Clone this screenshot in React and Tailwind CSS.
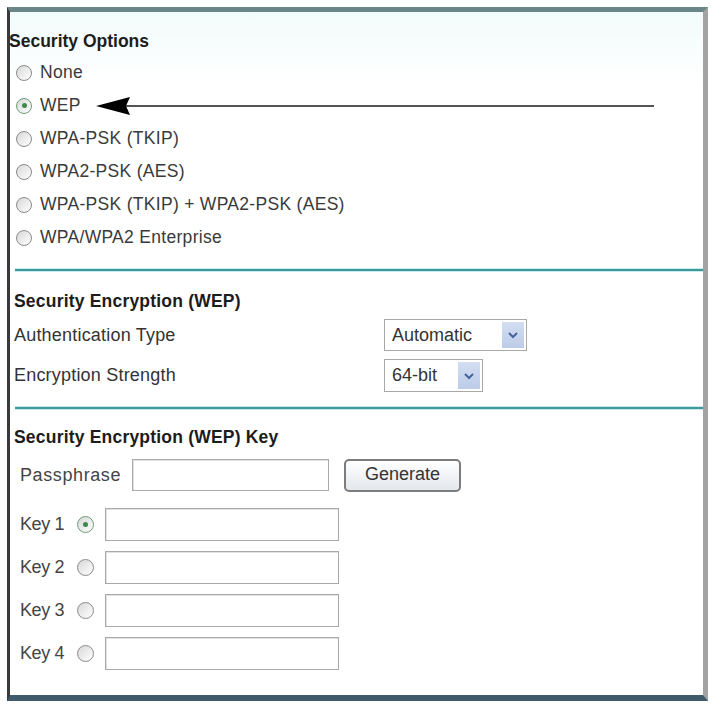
const font = "font-['Liberation_Sans',Arial,sans-serif]";

function Radio({ checked, size = 'w-[16px] h-[16px]' }) {
  return (
    <span
      className={`shrink-0 flex items-center justify-center ${size} rounded-full border-[1.5px] bg-gradient-to-br from-[#d8d8d8] to-white ${
        checked ? 'border-[#6c9c76]' : 'border-[#8a8a8a]'
      }`}
    >
      {checked && <span className="w-[5px] h-[5px] rounded-full bg-[#3d8a4c]" />}
    </span>
  );
}

function Divider({ className = '' }) {
  return (
    <div className={`ml-[5px] h-[2px] bg-[#3d999c] shadow-[0_1px_0_#c6ecee,0_-1px_0_#c6ecee] ${className}`} />
  );
}

function Select({ value, width }) {
  return (
    <div className={`${width} flex items-stretch border border-[#a8a8a8] bg-white p-[2px]`}>
      <span className="flex-1 flex items-center pl-[5px] text-[18px] text-[#333]">{value}</span>
      <span className="w-[22px] flex items-center justify-center bg-gradient-to-b from-[#d3def2] to-[#bccbe8]">
        <svg width="12" height="8" viewBox="0 0 12 8">
          <path d="M2 2 L6 6 L10 2" fill="none" stroke="#45639c" strokeWidth="2" />
        </svg>
      </span>
    </div>
  );
}

function TextBox({ width, height }) {
  return <div className={`${width} ${height} border border-[#a9a9a9] bg-white shadow-[inset_1px_1px_0_#e2e2e2]`} />;
}

const options = [
  'None',
  'WEP',
  'WPA-PSK (TKIP)',
  'WPA2-PSK (AES)',
  'WPA-PSK (TKIP) + WPA2-PSK (AES)',
  'WPA/WPA2 Enterprise',
];

export default function App() {
  return (
    <div className={`w-[712px] h-[706px] bg-white pt-[7px] pl-[7px] ${font}`}>
      <div className="w-[701px] h-[694px] border-l-[3px] border-l-[#3a3a3a] border-t-[5px] border-t-[#6b8686] border-r-[5px] border-r-[#a3a3a3] border-b-[6px] border-b-[#3f5a6a] bg-[linear-gradient(to_bottom,#f2fbfb,#ffffff_70px)] flex flex-col">
        {/* Security Options */}
        <div className="pt-[19px]">
          <div className="-ml-[1px] h-[20px] leading-[20px] text-[17.5px] font-bold text-[#1c1c1c]">
            Security Options
          </div>
          <div className="mt-[5px] flex flex-col">
            {options.map((o, i) => (
              <div key={o} className="h-[33px] flex items-center pl-[6px]">
                <Radio checked={i === 1} />
                <span className="ml-[8px] text-[17.5px] text-[#3a3a3a] tracking-[0.3px]">{o}</span>
                {i === 1 && (
                  <svg className="ml-[15px]" width="558" height="20" viewBox="0 0 558 20">
                    <line x1="30" y1="10" x2="558" y2="10" stroke="#555" strokeWidth="2" />
                    <polygon points="0,10 34,1 30,10 34,19" fill="#000" />
                  </svg>
                )}
              </div>
            ))}
          </div>
        </div>

        <Divider className="mt-[15px]" />

        {/* Security Encryption (WEP) */}
        <div className="mt-[20px] pl-[4px] h-[20px] leading-[20px] text-[17.5px] font-bold text-[#1c1c1c] tracking-[0.2px]">
          Security Encryption (WEP)
        </div>
        <div className="mt-[8px] h-[32px] flex items-center">
          <span className="w-[374px] pl-[4px] text-[18px] text-[#333] tracking-[0.2px]">Authentication Type</span>
          <Select value="Automatic" width="w-[143px] h-[32px]" />
        </div>
        <div className="mt-[8px] h-[33px] flex items-center">
          <span className="w-[374px] pl-[4px] text-[18px] text-[#333] tracking-[0.2px]">Encryption Strength</span>
          <Select value="64-bit" width="w-[99px] h-[33px]" />
        </div>

        <Divider className="mt-[15px]" />

        {/* Security Encryption (WEP) Key */}
        <div className="mt-[18px] pl-[4px] h-[20px] leading-[20px] text-[17.5px] font-bold text-[#1c1c1c] tracking-[0.2px]">
          Security Encryption (WEP) Key
        </div>
        <div className="mt-[11px] h-[34px] flex items-center">
          <span className="w-[122px] pl-[10px] text-[18px] text-[#444] tracking-[0.6px]">Passphrase</span>
          <TextBox width="w-[197px]" height="h-[32px]" />
          <button className="ml-[15px] w-[117px] h-[33px] rounded-[5px] border-2 border-[#7c7c7c] bg-gradient-to-b from-white to-[#e4e8ec] text-[18px] text-[#333] pb-[4px]">
            Generate
          </button>
        </div>
        <div className="mt-[16px] flex flex-col gap-[10px]">
          {[1, 2, 3, 4].map((k) => (
            <div key={k} className="h-[33px] flex items-center">
              <span className="w-[67px] pl-[10px] text-[18px] text-[#444] tracking-[-0.4px]">Key {k}</span>
              <Radio checked={k === 1} size="w-[17px] h-[17px]" />
              <span className="ml-[11px]">
                <TextBox width="w-[234px]" height="h-[33px]" />
              </span>
            </div>
          ))}
        </div>
      </div>
    </div>
  );
}
